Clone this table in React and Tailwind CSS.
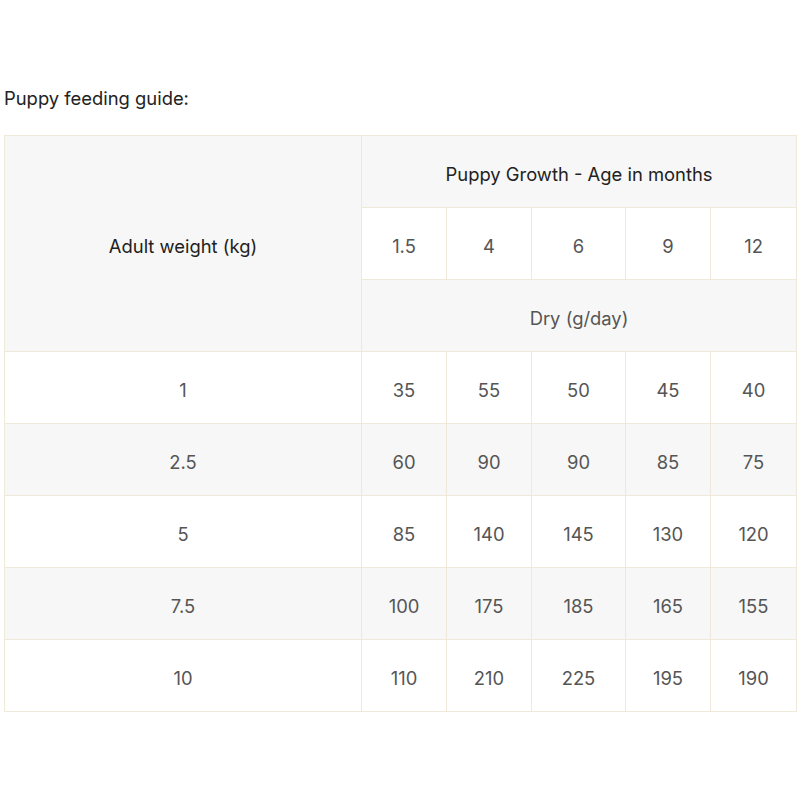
import React from "react";

const ages = ["1.5", "4", "6", "9", "12"];

const rows = [
  { weight: "1", values: ["35", "55", "50", "45", "40"] },
  { weight: "2.5", values: ["60", "90", "90", "85", "75"] },
  { weight: "5", values: ["85", "140", "145", "130", "120"] },
  { weight: "7.5", values: ["100", "175", "185", "165", "155"] },
  { weight: "10", values: ["110", "210", "225", "195", "190"] },
];

const cell = "border border-[#efe9da] text-center align-middle h-[72px] px-0 pt-[6px] pb-0";

const App = () => {
  return (
    <div className="min-h-[800px] bg-white px-[4px] pt-[86px] font-['Inter',sans-serif] text-[#555]">
      <p className="text-[18.4px] leading-[24px] text-[#222] mb-[25px]">Puppy feeding guide:</p>

      <table className="w-[792px] border-collapse table-fixed text-[18.4px]">
        <colgroup>
          <col className="w-[357px]" />
          <col className="w-[85px]" />
          <col className="w-[85px]" />
          <col className="w-[94px]" />
          <col className="w-[85px]" />
          <col className="w-[86px]" />
        </colgroup>
        <thead>
          <tr>
            <th rowSpan={3} className={`${cell} bg-[#f7f7f7] font-normal text-[#222]`}>
              Adult weight (kg)
            </th>
            <th colSpan={5} className={`${cell} bg-[#f7f7f7] font-normal text-[#222]`}>
              Puppy Growth - Age in months
            </th>
          </tr>
          <tr>
            {ages.map((a) => (
              <td key={a} className={`${cell} bg-white`}>
                {a}
              </td>
            ))}
          </tr>
          <tr>
            <td colSpan={5} className={`${cell} bg-[#f7f7f7]`}>
              Dry (g/day)
            </td>
          </tr>
        </thead>
        <tbody>
          {rows.map((r, i) => (
            <tr key={r.weight} className={i % 2 === 1 ? "bg-[#f7f7f7]" : "bg-white"}>
              <td className={cell}>{r.weight}</td>
              {r.values.map((v, j) => (
                <td key={j} className={cell}>
                  {v}
                </td>
              ))}
            </tr>
          ))}
        </tbody>
      </table>
    </div>
  );
};

export default App;
